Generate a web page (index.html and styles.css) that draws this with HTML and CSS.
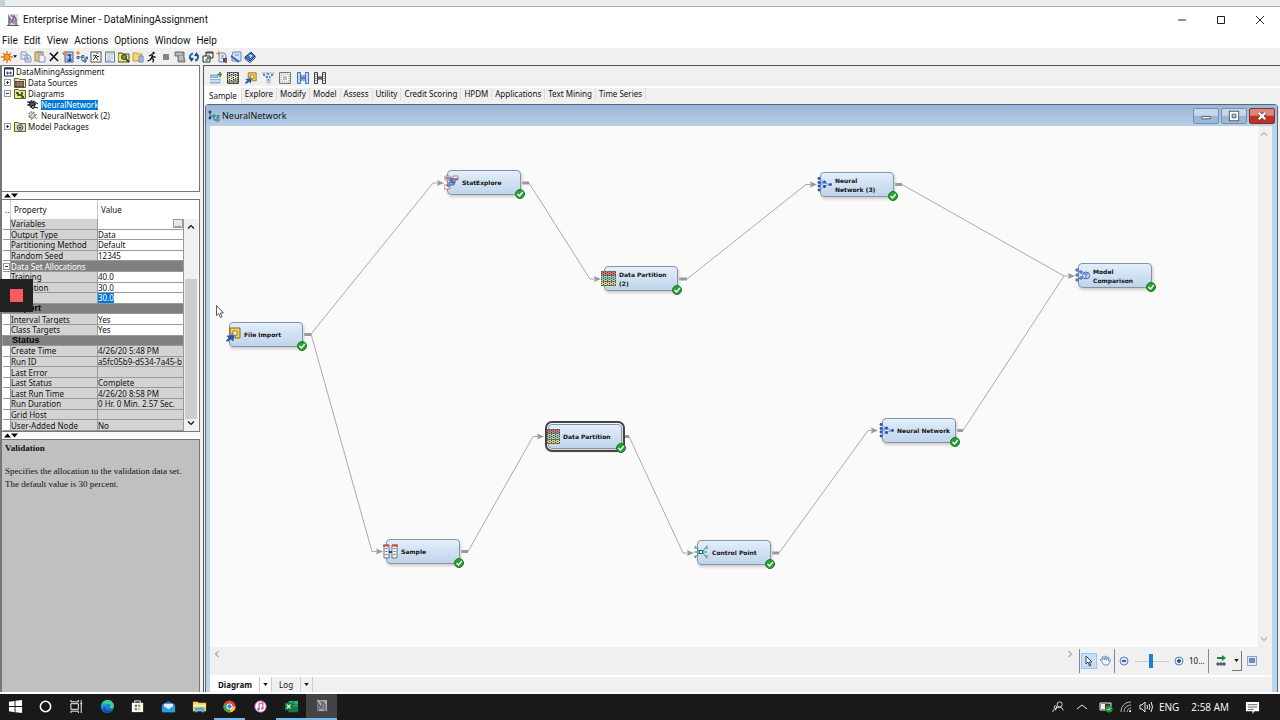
FILE: index.html
```html
<!DOCTYPE html>
<html lang="en">
<head>
    <meta charset="utf-8">
    <title>Enterprise Miner - DataMiningAssignment</title>
    <link rel="stylesheet" href="styles.css">
</head>
<body>
    <!-- shared icons -->
    <svg class="sprite" width="0" height="0">
        <defs>
            <linearGradient id="edgeFill" x1="0" y1="0" x2="1" y2="1">
                <stop offset="0" stop-color="#35c1f1"/><stop offset=".5" stop-color="#1b7fd4"/><stop offset="1" stop-color="#0c59a4"/>
            </linearGradient>
            <pattern id="grain" width="4" height="2" patternUnits="userSpaceOnUse">
                <rect width="1" height="1" fill="#333"/><rect x="2" y="1" width="1" height="1" fill="#333"/>
            </pattern>
        </defs>
        <symbol id="logo" viewBox="0 0 12 12">
            <rect x="1" y="0" width="10" height="11" fill="#d5dcea"/>
            <path d="M2 11V3l3 5 2-6 2 3v6" fill="none" stroke="#5a6c9c" stroke-width="1.4"/>
            <path d="M4 1l3 3M7 5v5M3 9l2-2" stroke="#d0544a" stroke-width="1.2"/>
            <path d="M0 11.5h12" stroke="#556"/>
        </symbol>
        <symbol id="sun" viewBox="0 0 12 12">
            <path d="M6 0v12M0 6h12M2 2l8 8M10 2l-8 8" stroke="#e87818" stroke-width="1.3"/>
            <circle cx="6" cy="6" r="3" fill="#f8a028" stroke="#d86810"/>
        </symbol>
        <symbol id="copy" viewBox="0 0 12 12">
            <path d="M1 1h5l1 2v5H1zM5 4h4l2 2v5H5z" fill="#e8f0fa" stroke="#8295b5"/>
            <path d="M6.500 7h3M6.500 9h3M2.500 4h2" stroke="#6f8fc5"/>
        </symbol>
        <symbol id="paste" viewBox="0 0 12 12">
            <rect x="1" y="1" width="8" height="9" fill="#e2c27e" stroke="#a68a50"/>
            <rect x="3" y="0" width="4" height="2.500" fill="#999"/>
            <path d="M5 4h4l2 2v5H5z" fill="#eef4fc" stroke="#7d94b8"/>
        </symbol>
        <symbol id="cross" viewBox="0 0 12 12">
            <path d="M2 2l8 8M10 1L2 10" stroke="#111" stroke-width="1.6"/>
        </symbol>
        <symbol id="newsource" viewBox="0 0 12 12">
            <rect x="3" y="1" width="8" height="10" fill="#b9cdea" stroke="#44618f"/>
            <path d="M4 4h6M4 8h6" stroke="#6d87b5"/><path d="M6 4h2v5M5.500 9.500h4" fill="none" stroke="#123c80" stroke-width="1.3"/>
            <path d="M2.500 0v5M0 2.500h5M1 1l3 3M4 1L1 4" stroke="#ee8828"/>
        </symbol>
        <symbol id="newdiagram" viewBox="0 0 12 12">
            <path d="M3 6h3v-1h1M6 6v4h2M9 7v2" fill="none" stroke="#358055"/>
            <path d="M1 5.500h2v2H1zM6 4.500h2v2H6zM8 9h2v2H8zM10 6h1.500v2H10z" fill="#e8f4ff" stroke="#245ca8"/>
            <path d="M2 0v4M0 2h4" stroke="#ee8828" stroke-width="1.3"/>
        </symbol>
        <symbol id="diagram" viewBox="0 0 12 12">
            <path d="M2 3v5M2 6h4M6 5v5h4" fill="none" stroke="#388060"/>
            <path d="M1 1h2v2H1zM1 7h2v2H1z" fill="#3050a8" stroke="#1c3478" stroke-width=".6"/>
            <path d="M5 5h2v2H5zM9 5.500h2v2H9zM8 9h3v2H8z" fill="#bfe9ee" stroke="#287888"/>
        </symbol>
        <symbol id="runpage" viewBox="0 0 12 12">
            <rect x="1" y="1" width="10" height="10" fill="#f8f8f8" stroke="#555"/>
            <path d="M3 9l2-2 1-3 2 2 1-1M6 6l2 3M3 5l2-1M7 2v1" stroke="#222" fill="none"/>
        </symbol>
        <symbol id="list" viewBox="0 0 12 12">
            <rect x="1.500" y="1" width="9" height="10" fill="#f1f6ff" stroke="#5578a8"/>
            <path d="M1.500 1.500h9" stroke="#a7b968" stroke-width="2"/><path d="M3 4h6M3 6h6M3 8h6M3 9.500h4" stroke="#7ca0d2" stroke-width=".7"/>
        </symbol>
        <symbol id="explore" viewBox="0 0 12 12">
            <path d="M0 2h4l1 1h6v8H0z" fill="#f0e568" stroke="#4b4b24"/>
            <circle cx="6" cy="6" r="2.500" fill="#5c9c68" stroke="#283828"/><path d="M8 8l3 3" stroke="#222" stroke-width="1.5"/>
        </symbol>
        <symbol id="library" viewBox="0 0 12 12">
            <path d="M1 2h4l1 1h4v7H1z" fill="#f5dc68" stroke="#c49a34"/>
            <path d="M7 5h4v6H7z" fill="#dbe9fb" stroke="#5582ba"/><path d="M8 7h2M8 9h2" stroke="#5582ba"/>
        </symbol>
        <symbol id="run" viewBox="0 0 12 12">
            <circle cx="7.500" cy="2" r="1.200" fill="#111"/>
            <path d="M3 5l3-1.500 1 2.500h2.500M6.500 4L5.500 7l2 1.500-.5 3M5.500 7L4 9 1.500 10" fill="none" stroke="#111" stroke-width="1.3"/>
        </symbol>
        <symbol id="stop" viewBox="0 0 12 12"><rect x="3" y="3" width="6" height="6" fill="#858585"/></symbol>
        <symbol id="results" viewBox="0 0 12 12">
            <path d="M1 1h9v5l1 5H4V5H1z" fill="#999" stroke="#777"/><path d="M2 3h6M5 6h4M5 8h4" stroke="#ddd"/>
        </symbol>
        <symbol id="refresh" viewBox="0 0 12 12">
            <path d="M5 2.500a3.500 3.500 0 0 0-2 6M7 9.500a3.500 3.500 0 0 0 2-6" fill="none" stroke="#176bbd" stroke-width="2"/>
            <path d="M1 6.500l5 .5-2.500 4zM11 5.500L6 5l2.500-4z" fill="#0b4f9c"/>
        </symbol>
        <symbol id="windows" viewBox="0 0 12 12">
            <path d="M4 1h7v6H4z" fill="#eee" stroke="#333"/><path d="M4 2h7" stroke="#333"/>
            <path d="M1 5h7v6H1z" fill="#fff" stroke="#222"/><path d="M3 9h3V7M4.500 8L6 6l1.500 2" fill="none" stroke="#188038"/>
        </symbol>
        <symbol id="newpage" viewBox="0 0 12 12">
            <path d="M3 2h5l2 2v7H3z" fill="#e2ebfa" stroke="#6a82b0"/><path d="M5 5h3M5 7h2" stroke="#6a82b0"/>
            <path d="M2.500 0v5M0 2.500h5" stroke="#ee8828"/><path d="M7 7h4v4H7z" fill="#2b4f98"/><path d="M10 8v4" stroke="#c42" stroke-width="2"/>
        </symbol>
        <symbol id="wizard" viewBox="0 0 12 12">
            <path d="M3 1h8v9H2V4z" fill="#cfe2fa" stroke="#6488c0"/><path d="M5 4h4" stroke="#6488c0"/><path d="M1 5l8 6" stroke="#326ab8" stroke-width="2"/>
        </symbol>
        <symbol id="help" viewBox="0 0 12 12">
            <path d="M1 6v2l5 3.500L11 7V5" fill="#f0f5fa" stroke="#163f7c"/><path d="M1 6l6-5 4 4-5 5z" fill="#3d78bd" stroke="#163f7c"/><path d="M5 5l2-1 1 1-2 1.500" fill="none" stroke="#fff"/>
        </symbol>

        <!-- project tree -->
        <symbol id="project" viewBox="0 0 10 10"><path d="M.5 1h9v8h-9z" fill="#fff" stroke="#223"/><path d="M0 1.500h10" stroke="#234" stroke-width="2"/><path d="M2 6h6M3.500 4.500v3M6.500 4.500v3" stroke="#357"/></symbol>
        <symbol id="folderdata" viewBox="0 0 12 10"><path d="M.5 2V.5h4l1 1h6v8H.5z" fill="#efe98f" stroke="#625e30"/><path d="M1 3h9v6H1z" fill="#52323b"/><path d="M1 5h9M1 7h9M4 3v6M7 3v6" stroke="#d4c5b8" stroke-width=".6"/></symbol>
        <symbol id="folderdiagram" viewBox="0 0 12 10"><path d="M.5 2V.5h4l1 1h6v8H.5z" fill="#eee778" stroke="#625e30"/><path d="M2 4h2v2h4v2h2M7 4h2" fill="none" stroke="#182f28" stroke-width="1.3"/></symbol>
        <symbol id="foldermodel" viewBox="0 0 12 10"><path d="M.5 2V.5h4l1 1h6v8H.5z" fill="#eee778" stroke="#625e30"/><circle cx="6" cy="5.500" r="2.800" fill="#9dc7f0" stroke="#334a90"/><path d="M4.500 5h3L6 7z" fill="#23377c"/></symbol>
        <symbol id="gear" viewBox="0 0 12 10"><circle cx="5" cy="4" r="3" fill="#446" stroke="#111" stroke-width="1.500" stroke-dasharray="1.500 1"/><path d="M0 2h3M0 5h3M7 7l4 1M8 2l3 2" stroke="#111"/><circle cx="6" cy="7" r="1.500" fill="#abc" stroke="#111"/></symbol>
        <symbol id="geargrey" viewBox="0 0 12 10"><circle cx="5" cy="4" r="3" fill="#ddd" stroke="#777" stroke-width="1.500" stroke-dasharray="1.500 1"/><path d="M2 7l5-6M4 9l6-6M8 6l2 2" stroke="#888"/></symbol>

        <!-- node and palette icons -->
        <symbol id="append" viewBox="0 0 12 12"><path d="M0 3h8v3H0zM0 7h10v4H0z" fill="#a6c5e8" stroke="#718cad" stroke-width=".7"/><path d="M0 6.500h9M0 9h10" stroke="#f3f8fc"/><path d="M10 0v5M7.500 2.500h5" stroke="#20953a" stroke-width="1.6"/></symbol>
        <symbol id="partition" viewBox="0 0 15 15">
            <rect width="15" height="15" fill="#e6eae8"/><path d="M0 2.500h15" stroke="#cf7478" stroke-width="3"/><path d="M0 7.500h15" stroke="#8cc0a8" stroke-width="4"/><path d="M0 12.500h15" stroke="#d8d16c" stroke-width="3"/>
            <rect width="15" height="15" fill="url(#grain)" opacity=".8"/><path d="M0 .5h15M0 14.500h15M0 4.500h15M0 10.500h15" fill="none" stroke="#444" stroke-width=".7"/>
        </symbol>
        <symbol id="partitionmono" viewBox="0 0 12 12"><rect width="12" height="12" fill="#eee"/><rect width="12" height="12" fill="url(#grain)"/><path d="M.5.5h11v11H.5zM0 3h12M0 9h12" fill="none" stroke="#333" stroke-width=".8"/><path d="M1 6l3-2 4 4 3-2M1 10.500h10" fill="none" stroke="#a2a035"/></symbol>
        <symbol id="import" viewBox="0 0 15 15">
            <path d="M4 1h10v10H9V8h2V4H7v3H4z" fill="#f6cf53" stroke="#8f6a12"/><path d="M7.500 4.500h3v3h-3z" fill="#dce9f8"/>
            <path d="M0 14l3-3-2-2 7-1-1 6-2-2-3 2z" fill="#225caf" stroke="#163f80" stroke-width=".6"/>
        </symbol>
        <symbol id="filter" viewBox="0 0 12 12"><path d="M0 1h12L8 6v5H5V6z" fill="#dfeaf7" stroke="#8399b5" stroke-width=".7"/><path d="M1 3h2M5 2h2M9 3h2M4 5h2M7 5h1M6 8h1" stroke="#386bb0" stroke-width="1.500"/></symbol>
        <symbol id="merge" viewBox="0 0 12 12"><path d="M.5.5h11v11H.5z" fill="#f3f3f3" stroke="#777"/><path d="M2 2h8v8H2z" fill="none" stroke="#a99" stroke-dasharray="1 1"/><path d="M4 5h4M4 7h4" stroke="#69a"/></symbol>
        <symbol id="sample" viewBox="0 0 15 15">
            <path d="M1 1h5v13H1zM9 1h5v13H9z" fill="#f7f7f7" stroke="#66747f"/><path d="M0 1.500h6M9 1.500h6" stroke="#d44540" stroke-width="2"/>
            <path d="M3.500 4v9M11.500 4v9" stroke="#446eaa" stroke-width="2" stroke-dasharray="1 2"/><path d="M6 8h3" stroke="#1849a8" stroke-width="2"/>
        </symbol>
        <symbol id="samplemono" viewBox="0 0 12 12"><path d="M.5.5h3v11h-3zM8.500.5h3v11h-3z" fill="#eee" stroke="#444"/><path d="M2 2v8M10 2v8" stroke="#555" stroke-dasharray="1 1"/><path d="M4 6h4M5 4v4M7 4v4" stroke="#333"/></symbol>
        <symbol id="timesample" viewBox="0 0 12 12"><path d="M.5.5h3v11h-3zM8.500.5h3v11h-3z" fill="#bed9f8" stroke="#3f73b6"/><path d="M4 6h4M5 3v6M7 3v6" stroke="#2e5ca8"/></symbol>
        <symbol id="statexplore" viewBox="0 0 15 15">
            <path d="M1 1h5v4H1zM9 1h5v4H9zM0 10h6v4H0z" fill="#f6f6f8" stroke="#9a8a90"/><path d="M6 3h2v3H6zM5 7h5v3H5zM8 4h3v4H8z" fill="#8cb5e0" stroke="#3b65a8"/>
            <path d="M2 3h3M5 12l-2-2M11 4h3" stroke="#c33939" stroke-width="1.5"/>
        </symbol>
        <symbol id="neural" viewBox="0 0 15 15">
            <path d="M2 1l5 4-5 1 5 3-5 4M2 6h5M2 9l5-4 6 3-6 1M7 5l6 3" fill="none" stroke="#6b88c8" stroke-width=".7"/>
            <g fill="#1f4fb0"><circle cx="2" cy="1.500" r="1.400"/><circle cx="2" cy="5.500" r="1.400"/><circle cx="2" cy="9" r="1.400"/><circle cx="2" cy="13" r="1.400"/><circle cx="7.500" cy="5" r="1.500"/><circle cx="7.500" cy="9.500" r="1.500"/><circle cx="13.500" cy="7.500" r="1.400"/></g>
        </symbol>
        <symbol id="compare" viewBox="0 0 15 15">
            <path d="M1 1h2v2H1zM1 6h2v2H1zM1 11h2v2H1zM5 3h2v2H5zM5 9h2v2H5z" fill="#fff" stroke="#2959b5"/><circle cx="11" cy="7.500" r="3.500" fill="#c9dcf5" stroke="#3f6cb8"/><path d="M9 6h4M11 6v4M3 2l2 2M3 12l2-2" stroke="#3f6cb8"/>
        </symbol>
        <symbol id="control" viewBox="0 0 15 15">
            <path d="M0 7h5M1 1l4 5M1 13l4-5M9 7h4M9 6l4-5M9 8l4 5M13 1v3M13 10v3M1 2v2M1 10v3" fill="none" stroke="#2e9b69"/><path d="M5.500 5.500h3v3h-3z" fill="#fff" stroke="#2155a8"/>
        </symbol>
        <symbol id="check" viewBox="0 0 10 10"><circle cx="5" cy="5" r="4.500" fill="#2c9f32" stroke="#167b1d"/><path d="M2.500 5l2 2 3.300-4" fill="none" stroke="#fff" stroke-width="1.3"/></symbol>
        <symbol id="up" viewBox="0 0 8 8"><path d="M1 5.500l3-3 3 3" fill="none" stroke="currentColor" stroke-width="1.2"/></symbol>
        <symbol id="down" viewBox="0 0 8 8"><path d="M1 2.500l3 3 3-3" fill="none" stroke="currentColor" stroke-width="1.2"/></symbol>
        <symbol id="left" viewBox="0 0 8 8"><path d="M5.500 1l-3 3 3 3" fill="none" stroke="currentColor" stroke-width="1.2"/></symbol>
        <symbol id="right" viewBox="0 0 8 8"><path d="M2.500 1l3 3-3 3" fill="none" stroke="currentColor" stroke-width="1.2"/></symbol>
        <symbol id="caret" viewBox="0 0 6 4"><path d="M0 0h6L3 4z" fill="#111"/></symbol>
        <symbol id="splitarrows" viewBox="0 0 16 5"><path d="M1 4.500h7L4.500.5zM8 .5h7L11.500 4.500z" fill="#000"/></symbol>
        <symbol id="pointer" viewBox="0 0 8 13"><path d="M.5.5v10l2.300-2 1.700 4 1.500-.7-1.600-3.800h3z" fill="#fff" stroke="#333" stroke-width=".8"/></symbol>
    </svg>

    <div class="behind"></div>

    <header class="titlebar">
        <svg class="logo"><use href="#logo"/></svg>
        <h1>Enterprise Miner - DataMiningAssignment</h1>
        <div class="winbuttons">
            <button aria-label="Minimize"><svg viewBox="0 0 10 10"><path d="M1 5h8" stroke="#222"/></svg></button>
            <button aria-label="Maximize"><svg viewBox="0 0 10 10"><path d="M1.500 1.500h7v7h-7z" fill="none" stroke="#222"/></svg></button>
            <button aria-label="Close"><svg viewBox="0 0 10 10"><path d="M1 1l8 8M9 1L1 9" stroke="#222"/></svg></button>
        </div>
    </header>

    <nav class="menubar">
        <button>File</button><button>Edit</button><button>View</button><button>Actions</button><button>Options</button><button>Window</button><button>Help</button>
    </nav>

    <div class="toolbar">
        <button class="wide" aria-label="New"><svg><use href="#sun"/></svg><svg class="caret"><use href="#caret"/></svg></button>
        <button aria-label="Copy"><svg><use href="#copy"/></svg></button>
        <button aria-label="Paste"><svg><use href="#paste"/></svg></button>
        <button aria-label="Delete"><svg><use href="#cross"/></svg></button>
        <button aria-label="Create Data Source"><svg><use href="#newsource"/></svg></button>
        <button aria-label="Create Diagram"><svg><use href="#newdiagram"/></svg></button>
        <button aria-label="Run Page"><svg><use href="#runpage"/></svg></button>
        <button aria-label="Log"><svg><use href="#list"/></svg></button>
        <button aria-label="Explorer"><svg><use href="#explore"/></svg></button>
        <button aria-label="Library"><svg><use href="#library"/></svg></button>
        <button aria-label="Run"><svg><use href="#run"/></svg></button>
        <button aria-label="Stop"><svg><use href="#stop"/></svg></button>
        <button aria-label="Results"><svg><use href="#results"/></svg></button>
        <button aria-label="Refresh"><svg><use href="#refresh"/></svg></button>
        <button aria-label="Windows"><svg><use href="#windows"/></svg></button>
        <button aria-label="Model Package"><svg><use href="#newpage"/></svg></button>
        <button aria-label="Wizard"><svg><use href="#wizard"/></svg></button>
        <button aria-label="Help"><svg><use href="#help"/></svg></button>
    </div>

    <main class="main">
        <aside class="side">
            <ul class="tree">
                <li><svg class="proj"><use href="#project"/></svg>DataMiningAssignment</li>
                <li><span class="toggle plus"></span><svg><use href="#folderdata"/></svg>Data Sources</li>
                <li><span class="toggle"></span><svg><use href="#folderdiagram"/></svg>Diagrams</li>
                <li class="child"><svg><use href="#gear"/></svg><span class="selected">NeuralNetwork</span></li>
                <li class="child"><svg><use href="#geargrey"/></svg>NeuralNetwork (2)</li>
                <li><span class="toggle plus"></span><svg><use href="#foldermodel"/></svg>Model Packages</li>
            </ul>
            <div class="split"><svg><use href="#splitarrows"/></svg></div>
            <section class="props">
                <div class="props-head"><span class="dots">..</span><span class="prop">Property</span><span class="val">Value</span></div>
                <div class="props-body">
                    <table>
                        <tbody>
                            <tr><td></td><th>Variables</th><td><button class="more">...</button></td></tr>
                            <tr><td></td><th>Output Type</th><td>Data</td></tr>
                            <tr><td></td><th>Partitioning Method</th><td>Default</td></tr>
                            <tr><td></td><th>Random Seed</th><td>12345</td></tr>
                            <tr class="group"><td><span class="toggle"></span></td><th colspan="2">Data Set Allocations</th></tr>
                            <tr><td></td><th>Training</th><td>40.0</td></tr>
                            <tr><td></td><th>Validation</th><td>30.0</td></tr>
                            <tr><td></td><th>Test</th><td><span class="selected">30.0</span></td></tr>
                            <tr class="group heading"><th colspan="3">Report</th></tr>
                            <tr><td></td><th>Interval Targets</th><td>Yes</td></tr>
                            <tr><td></td><th>Class Targets</th><td>Yes</td></tr>
                            <tr class="group heading"><th colspan="3">Status</th></tr>
                            <tr class="fixed"><td></td><th>Create Time</th><td>4/26/20 5:48 PM</td></tr>
                            <tr class="fixed"><td></td><th>Run ID</th><td>a5fc05b9-d534-7a45-b</td></tr>
                            <tr class="fixed"><td></td><th>Last Error</th><td></td></tr>
                            <tr class="fixed"><td></td><th>Last Status</th><td>Complete</td></tr>
                            <tr class="fixed"><td></td><th>Last Run Time</th><td>4/26/20 8:58 PM</td></tr>
                            <tr class="fixed"><td></td><th>Run Duration</th><td>0 Hr. 0 Min. 2.57 Sec.</td></tr>
                            <tr class="fixed"><td></td><th>Grid Host</th><td></td></tr>
                            <tr class="fixed"><td></td><th>User-Added Node</th><td>No</td></tr>
                        </tbody>
                    </table>
                    <div class="vscroll"><svg><use href="#up"/></svg><span class="bar"></span><svg><use href="#down"/></svg></div>
                </div>
            </section>
            <div class="split"><svg><use href="#splitarrows"/></svg></div>
            <section class="info">
                <h2>Validation</h2>
                <p>Specifies the allocation to the validation data set. The default value is 30 percent.</p>
            </section>
        </aside>

        <section class="work">
            <div class="palette">
                <button aria-label="Append"><svg><use href="#append"/></svg></button>
                <button aria-label="Data Partition"><svg><use href="#partitionmono"/></svg></button>
                <button aria-label="File Import"><svg><use href="#import"/></svg></button>
                <button aria-label="Filter"><svg><use href="#filter"/></svg></button>
                <button aria-label="Input Data"><svg><use href="#merge"/></svg></button>
                <button aria-label="Merge"><svg><use href="#timesample"/></svg></button>
                <button aria-label="Sample"><svg><use href="#samplemono"/></svg></button>
            </div>
            <div class="tabs">
                <button class="active">Sample</button><button>Explore</button><button>Modify</button><button>Model</button><button>Assess</button><button>Utility</button><button>Credit Scoring</button><button>HPDM</button><button>Applications</button><button>Text Mining</button><button>Time Series</button>
            </div>

            <div class="frame">
                <div class="frame-title">
                    <svg><use href="#diagram"/></svg>
                    <h2>NeuralNetwork</h2>
                    <button aria-label="Minimize"><svg viewBox="0 0 24 15"><path d="M7.500 8h9v2.500h-9z" fill="#fff" stroke="#556"/></svg></button>
                    <button aria-label="Restore"><svg viewBox="0 0 24 15"><path d="M8.500 4h7v7h-7z" fill="none" stroke="#4a5868" stroke-width="4"/><path d="M8.500 4h7v7h-7z" fill="none" stroke="#fff" stroke-width="2"/></svg></button>
                    <button class="close" aria-label="Close"><svg viewBox="0 0 24 15"><path d="M8.500 4l7 7M15.500 4l-7 7" stroke="#633" stroke-width="4"/><path d="M8.500 4l7 7M15.500 4l-7 7" stroke="#fff" stroke-width="2.500"/></svg></button>
                </div>
                <div class="frame-body">
                    <div class="canvas-row">
                        <div class="canvas">
                            <svg class="links" viewBox="210 126 1048 522" width="1048" height="522">
                                <g fill="none" stroke="#aaa">
                                    <path d="M311 334L433 183h9"/>
                                    <path d="M311 334L372 551.500h9"/>
                                    <path d="M529 183L590 279h9"/>
                                    <path d="M687 279L806 184.500h9"/>
                                    <path d="M902 184.500L1064 276h9"/>
                                    <path d="M468 551.500L533 436.500h9"/>
                                    <path d="M629 436.500L683 553h9"/>
                                    <path d="M779 553L868 430.500h8"/>
                                    <path d="M963 430.500L1064 276"/>
                                </g>
                                <g fill="#999">
                                    <path d="M437 180l7 3-7 3 1-3zM376 548.500l7 3-7 3 1-3zM594 276l7 3-7 3 1-3zM810 181.500l7 3-7 3 1-3zM1068 273l7 3-7 3 1-3zM537 433.500l7 3-7 3 1-3zM687 550l7 3-7 3 1-3zM871 427.500l7 3-7 3 1-3z"/>
                                </g>
                                <path d="M304 334.500h7M522 183h7M679 279h8M895 184.500h7M461 551.500h7M624 436.500h5M772 553h7M957 430.500h6" stroke="#999" stroke-width="3"/>
                            </svg>
                            <div class="node n-import"><svg class="kind"><use href="#import"/></svg><span>File Import</span><svg class="ok"><use href="#check"/></svg></div>
                            <div class="node n-stat"><svg class="kind"><use href="#statexplore"/></svg><span>StatExplore</span><svg class="ok"><use href="#check"/></svg></div>
                            <div class="node n-part2"><svg class="kind"><use href="#partition"/></svg><span>Data Partition<br>(2)</span><svg class="ok"><use href="#check"/></svg></div>
                            <div class="node n-neural3"><svg class="kind"><use href="#neural"/></svg><span>Neural<br>Network (3)</span><svg class="ok"><use href="#check"/></svg></div>
                            <div class="node n-compare"><svg class="kind"><use href="#compare"/></svg><span>Model<br>Comparison</span><svg class="ok"><use href="#check"/></svg></div>
                            <div class="node n-sample"><svg class="kind"><use href="#sample"/></svg><span>Sample</span><svg class="ok"><use href="#check"/></svg></div>
                            <div class="node n-part picked"><svg class="kind"><use href="#partition"/></svg><span>Data Partition</span><svg class="ok"><use href="#check"/></svg></div>
                            <div class="node n-control"><svg class="kind"><use href="#control"/></svg><span>Control Point</span><svg class="ok"><use href="#check"/></svg></div>
                            <div class="node n-neural"><svg class="kind"><use href="#neural"/></svg><span>Neural Network</span><svg class="ok"><use href="#check"/></svg></div>
                            <svg class="cursor"><use href="#pointer"/></svg>
                        </div>
                        <div class="vscroll light"><svg><use href="#up"/></svg><svg><use href="#down"/></svg></div>
                    </div>
                    <div class="canvas-tools">
                        <div class="hscroll"><svg><use href="#left"/></svg><svg><use href="#right"/></svg></div>
                        <div class="group-tools">
                            <button class="on" aria-label="Select"><svg viewBox="0 0 12 12"><path d="M3 1v8l2-2 1.500 4 1.300-.6L6.500 7H9z" fill="#fff" stroke="#345"/></svg></button>
                            <button aria-label="Pan"><svg viewBox="0 0 12 12"><path d="M3 7L1 5l1-1 2 1-1-3 1-.5L6 5V1h1l.5 4L9 2l1 .5L9.500 6 11 4.500l.5 1L9 10H5z" fill="#eef5ff" stroke="#4a78b5" stroke-width=".8"/></svg></button>
                        </div>
                        <div class="group-tools zoom">
                            <button aria-label="Zoom out"><svg viewBox="0 0 12 12"><circle cx="6" cy="6" r="4" fill="#d8e8fa" stroke="#5b83b8"/><path d="M4 6h4" stroke="#123e8c" stroke-width="1.5"/></svg></button>
                            <input type="range" min="0" max="100" value="47" aria-label="Zoom">
                            <button aria-label="Zoom in"><svg viewBox="0 0 12 12"><circle cx="6" cy="6" r="4" fill="#d8e8fa" stroke="#5b83b8"/><path d="M4 6h4M6 4v4" stroke="#123e8c" stroke-width="1.5"/></svg></button>
                            <span>10...</span>
                        </div>
                        <div class="group-tools last">
                            <button class="layout" aria-label="Layout"><svg viewBox="0 0 12 12"><path d="M2 3h6" stroke="#178a38" stroke-width="2"/><path d="M7 0l4 3-4 3z" fill="#178a38"/><path d="M2 8h2v2H2zM8 8h2v2H8zM4 9h4M6 7v4" fill="none" stroke="#234"/></svg></button>
                            <button class="drop" aria-label="Layout options"><svg class="caret"><use href="#caret"/></svg></button>
                            <button class="view" aria-label="Overview"><svg viewBox="0 0 12 12"><path d="M1.500 1.500h9v9h-9z" fill="#e3eaf8" stroke="#86a2ca"/><path d="M3 3h6v5H3z" fill="#7485ca"/></svg></button>
                        </div>
                    </div>
                    <div class="bottom-tabs">
                        <button class="active">Diagram</button><button class="active arrow" aria-label="Diagram menu"><svg class="caret"><use href="#caret"/></svg></button>
                        <button class="log">Log</button><button class="arrow" aria-label="Log menu"><svg class="caret"><use href="#caret"/></svg></button>
                    </div>
                </div>
            </div>
        </section>
    </main>

    <footer class="taskbar">
        <div class="apps">
            <button aria-label="Start"><svg viewBox="0 0 16 16"><path d="M1 3l6-1v5.500H1zM8 1.800L15 1v6.500H8zM1 8.500h6V14l-6-1zM8 8.500h7V15l-7-.8z" fill="#fff"/></svg></button>
            <button aria-label="Cortana"><svg viewBox="0 0 16 16"><circle cx="8" cy="8" r="5.500" fill="none" stroke="#fff" stroke-width="1.600"/></svg></button>
            <button aria-label="Task View"><svg viewBox="0 0 16 16"><path d="M2 1v2h8V1M2 15v-2h8v2M2 5h8v6H2zM13 1v14M12 5h2" fill="none" stroke="#fff"/></svg></button>
            <button aria-label="Edge"><svg viewBox="0 0 16 16"><circle cx="8" cy="8" r="7" fill="url(#edgeFill)"/><path d="M5 9c0-5 6-5 6-2 0 1-1 1.500-.5 2.500 1 1 4 .5 4.500-1.500C15 4 12 1 8 1 5 1 3 3 2 5c3-2 5 0 3 4z" fill="#42cf96"/><path d="M5 8c0 4 4 6 8 4-1 2-5 3-7 2-3-1-4-5-1-6z" fill="#0b4b99"/></svg></button>
            <button aria-label="Store"><svg viewBox="0 0 16 16"><path d="M5 4V2h6v2" fill="none" stroke="#fff"/><path d="M2 4h12v10H2z" fill="#fff"/><path d="M5 6h2.500v2.500H5z" fill="#e5482e"/><path d="M8.500 6H11v2.500H8.500z" fill="#75b62b"/><path d="M5 9.500h2.500V12H5z" fill="#259be0"/><path d="M8.500 9.500H11V12H8.500z" fill="#f7b719"/></svg></button>
            <button aria-label="Mail"><svg viewBox="0 0 16 16"><path d="M1 6l7-4 7 4v8H1z" fill="#1670bd"/><path d="M3 5h10v6H3z" fill="#dceefa"/><path d="M1 6l7 5 7-5v8H1z" fill="#2a9ce8"/></svg></button>
            <button aria-label="File Explorer"><svg viewBox="0 0 16 16"><path d="M1 3h5l1 1h8v9H1z" fill="#f5cf65"/><path d="M1 6h14v2H1z" fill="#fff0aa"/><path d="M3 14V9h10v5h-3v-2H6v2z" fill="#4badde"/></svg></button>
            <button class="open" aria-label="Chrome"><svg viewBox="0 0 16 16"><circle cx="8" cy="8" r="6.500" fill="#e34234"/><path d="M8 8L2.400 4.700A6.500 6.500 0 0 0 8 14.500z" fill="#38a853"/><path d="M8 8h6.500A6.500 6.500 0 0 1 8 14.500L10 9z" fill="#fbc52c"/><circle cx="8" cy="8" r="3.200" fill="#fff"/><circle cx="8" cy="8" r="2.300" fill="#4285f4"/></svg></button>
            <button aria-label="iTunes"><svg viewBox="0 0 16 16"><circle cx="8" cy="8" r="6" fill="#fff" stroke="#cf70d4"/><path d="M6.500 11V5l4-1v6" fill="none" stroke="#e44b88" stroke-width="1.300"/><circle cx="5.800" cy="11" r="1.300" fill="#845fe0"/><circle cx="9.800" cy="10" r="1.300" fill="#e44b88"/></svg></button>
            <button class="open" aria-label="Excel"><svg viewBox="0 0 16 16"><path d="M5 2h10v12H5z" fill="#2bac70"/><path d="M5 8h10v6H5z" fill="#167743"/><path d="M10 2v12M5 6h10M5 10h10" stroke="#107c41"/><path d="M1 4h8v8H1z" fill="#107c41"/><path d="M3 6l4 4M7 6l-4 4" stroke="#fff" stroke-width="1.300"/></svg></button>
            <button class="open current" aria-label="Enterprise Miner"><svg class="logo"><use href="#logo"/></svg></button>
        </div>
        <div class="tray">
            <svg class="people" viewBox="0 0 14 14"><circle cx="9" cy="4" r="3" fill="none" stroke="#eee"/><path d="M4 11c0-5 9-5 9 0M1 13c0-3 1-4 4-4" fill="none" stroke="#eee"/><circle cx="4" cy="7" r="1.500" fill="none" stroke="#eee"/></svg>
            <svg class="chev" viewBox="0 0 12 12"><path d="M1 8l5-4 5 4" fill="none" stroke="#eee"/></svg>
            <svg viewBox="0 0 14 12"><path d="M1 2h11v7H1z" fill="#333" stroke="#eee"/><path d="M2 3h4v5H2z" fill="#eee"/><circle cx="10" cy="8" r="3.500" fill="#25943a"/><path d="M8.500 8l1 1 2-2" fill="none" stroke="#fff"/></svg>
            <svg viewBox="0 0 14 12"><path d="M2 11C2 5 6 1 12 1M5 11c0-4 3-7 7-7M8 11c0-2 2-4 4-4" fill="none" stroke="#bbb"/><path d="M10 11a2 2 0 0 1 2-2v2z" fill="#fff"/></svg>
            <svg class="volume" viewBox="0 0 14 12"><path d="M1 4h2l3-3v10L3 8H1zM8 4q1 2 0 4M10 3q2 3 0 6M12 1q3 5 0 10" fill="none" stroke="#eee"/></svg>
            <span class="lang">ENG</span>
            <time>2:58 AM</time>
            <svg class="notes" viewBox="0 0 16 16"><path d="M1 2h14v10h-5l-2 3v-3H1z" fill="#fff"/><path d="M3 5h10M3 7.500h10M3 10h6" stroke="#333" stroke-width=".8"/></svg>
        </div>
    </footer>

    <!-- screen recorder badge -->
    <button class="recorder" aria-label="Stop recording"></button>
</body>
</html>
```

FILE: styles.css
```css
*{
    box-sizing: border-box;
}
body{
    margin:0;
    height:100vh;
    display:flex;
    flex-direction: column;
    overflow: hidden;
    background-color: #f0f0f0;
    font-family: "Noto Sans", sans-serif;
    font-size: 8px;
    line-height: 10px;
    color:#111;
}
button{
    font:inherit;
    color:inherit;
    padding:0;
    border:none;
    background:none;
}
h1, h2, p, ul{
    margin:0;
    padding:0;
    font-size: inherit;
    font-weight: normal;
}
svg{
    display:block;
    flex:none;
    width:12px;
    height:12px;
}
svg.sprite{
    position: absolute;
    width:0;
    height:0;
}
svg.caret{
    width:5px;
    height:3px;
}
.selected{
    background-color: #0078d7;
    color:white;
}

/* window top */
.behind{
    height:7px;
    background-color: #eceff1;
    border-bottom:1px solid #a9b1b8;
    border-left:5px solid #c3d3da;
}
.titlebar{
    height:26px;
    display:flex;
    align-items: center;
    gap:4px;
    padding-left:7px;
    background-color: white;
    font:10px/14px Roboto, sans-serif;
}
.winbuttons{
    margin-left:auto;
    padding-right:1px;
    display:flex;
}
.winbuttons button{
    width:39px;
    display:flex;
    justify-content: center;
}
.winbuttons svg{
    width:10px;
    height:10px;
}
.menubar{
    height:15px;
    display:flex;
    gap:6px;
    padding-left:2px;
    background-color: white;
    font:10px/16px Roboto, sans-serif;
}
.toolbar{
    height:17px;
    display:flex;
    align-items: center;
}
.toolbar button{
    width:14px;
    display:flex;
    align-items: center;
    justify-content: center;
}
.toolbar .wide{
    width:19px;
    justify-content: flex-start;
    padding-left:1px;
}
.toolbar .wide .caret{
    width:4px;
}

/* left column */
.main{
    flex:1;
    display:flex;
    gap:3px;
    min-height:0;
    border-bottom:2px solid white;
}
.side{
    width:200px;
    display:flex;
    flex-direction: column;
    border-left:2px solid #777;
}
.tree{
    height:127px;
    display:grid;
    grid-template-rows:repeat(6, 11px);
    list-style: none;
    background-color: white;
    border:1px solid #777;
    border-left:none;
}
.tree li{
    display:flex;
    align-items: center;
    gap:2px;
    padding-left:2px;
}
.tree li.child{
    padding-left:25px;
}
.tree svg{
    height:10px;
}
.tree .proj{
    width:10px;
}
.toggle{
    width:7px;
    height:7px;
    margin-right:1px;
    border:1px solid #999;
    background:linear-gradient(#333, #333) center / 3px 1px no-repeat white;
}
.toggle.plus{
    background:linear-gradient(#333, #333) center / 3px 1px no-repeat, linear-gradient(#333, #333) center / 1px 3px no-repeat white;
}
.split{
    height:7px;
    padding:1px 0 0 1px;
    background-color: #fafafa;
}
.split svg{
    width:16px;
    height:5px;
}
.props{
    height:233px;
    display:flex;
    flex-direction: column;
    border:1px solid #777;
    border-left:none;
    background-color: white;
}
.props-head{
    height:19px;
    display:flex;
    align-items: center;
}
.props-head .dots{
    width:8px;
    padding-left:3px;
}
.props-head .prop{
    width:87px;
    padding-left:3px;
}
.props-head .val{
    padding-left:3px;
}
.props-head .prop, .props-head .val{
    align-self: stretch;
    line-height: 20px;
    border-left:1px solid #ccc;
}
.props-body{
    flex:1;
    display:flex;
    min-height:0;
}
.props table{
    width:182px;
    height:100%;
    table-layout: fixed;
    border-collapse: collapse;
    line-height: 9px;
}
.props td, .props th{
    padding:0;
    border:1px solid #999;
    text-align: left;
    font-weight: normal;
    white-space: nowrap;
    overflow: hidden;
}
.props td:first-child{
    width:8px;
    border-left:none;
}
.props th{
    width:87px;
    background-color: #d3d3d3;
}
.props tr:first-child > *{
    border-top:none;
}
.props .group th{
    background-color: #808080;
    color:white;
}
.props .heading th{
    padding-left:9px;
    color:black;
    font:bold 9px/9px "Liberation Sans", sans-serif;
}
.props .fixed td:last-child{
    background-color: #d3d3d3;
}
.props .toggle{
    display:block;
    margin:0;
}
.more{
    display:block;
    width:10px;
    height:9px;
    margin-left:auto;
    line-height: 6px;
    border:1px solid #999;
    background-color: #e8e8e8;
}
.vscroll{
    width:14px;
    display:flex;
    flex-direction: column;
    align-items: center;
    justify-content: space-between;
    padding:4px 0;
    background-color: #f0f0f0;
}
.vscroll svg{
    width:8px;
    height:8px;
}
.vscroll .bar{
    width:12px;
    height:140px;
    margin-top:auto;
    background-color: #cdcdcd;
}
.vscroll.light{
    color:#b5b5b5;
    padding-right:2px;
}
.info{
    flex:1;
    padding:2px 3px;
    border-right:1px solid #777;
    border-top:1px solid #777;
    background-color: #c0c0c0;
    font:9px/13px "Liberation Serif", serif;
}
.info h2{
    font-weight: bold;
    margin-bottom:10px;
}

/* right column */
.work{
    flex:1;
    min-width:0;
    display:flex;
    flex-direction: column;
    border-top:1px solid #555;
    border-left:1px solid #555;
}
.palette{
    width:128px;
    height:20px;
    display:flex;
    align-items: center;
    justify-content: space-between;
    padding:3px 6px 0;
}
.tabs{
    height:18px;
    display:flex;
    align-items: flex-start;
    padding-left:1px;
    border-top:2px solid white;
}
.tabs button{
    height:12px;
    padding:0 3px;
    border-right:1px solid #ddd;
}
.tabs .active{
    height:16px;
    padding:2px 4px;
    background-color: white;
}
.frame{
    flex:1;
    display:flex;
    flex-direction: column;
    min-height:0;
    margin:0 2px 0 1px;
    padding:0 5px 0 4px;
    border:1px solid #536a78;
    border-bottom:none;
    border-radius: 4px 4px 0 0;
    background-color: #bcd2e8;
}
.frame-title{
    height:21px;
    display:flex;
    align-items: center;
    gap:2px;
    margin:0 -5px 0 -4px;
    padding:0 2px;
    background:linear-gradient(#9ab5d5, #b9cfe7);
    font-size: 9px;
}
.frame-title h2{
    margin-right:auto;
}
.frame-title button{
    width:26px;
    height:16px;
    border:1px solid #7890ae;
    border-radius: 2px;
    background:linear-gradient(#c5d8ec 45%, #9ab8da 50%);
}
.frame-title button svg{
    width:24px;
    height:14px;
}
.frame-title .close{
    border-color: #7d3028;
    background:linear-gradient(#dc8878 45%, #bd3420 50%);
}
.frame-body{
    flex:1;
    display:flex;
    flex-direction: column;
    min-height:0;
    background-color: #f0f0f0;
}
.canvas-row{
    flex:1;
    display:flex;
    min-height:0;
}
.canvas{
    flex:1;
    position: relative;
    overflow: hidden;
    background-color: #fafafa;
}
.links{
    width:1048px;
    height:522px;
}

/* diagram nodes */
.node{
    position: absolute;
    width:74px;
    height:25px;
    display:flex;
    align-items: center;
    border:1px solid #8794a5;
    border-radius: 4px;
    background:linear-gradient(#e2eefb, #bfd4ea);
    box-shadow:1px 2px 3px #ccc;
    font:bold 6px/9px "DejaVu Sans", sans-serif;
    white-space: nowrap;
}
.node .kind{
    width:15px;
    height:15px;
    margin-left:-4px;
    margin-right:3px;
}
.node .ok{
    position: absolute;
    right:-5px;
    bottom:-5px;
    width:10px;
    height:10px;
}
.picked{
    outline:2px solid #444;
    outline-offset:1px;
}
.n-import{ left:19px; top:196px; }
.n-stat{ left:237px; top:44px; }
.n-part2{ left:394px; top:140px; }
.n-neural3{ left:610px; top:46px; }
.n-compare{ left:868px; top:137px; }
.n-sample{ left:176px; top:413px; }
.n-part{ left:338px; top:298px; }
.n-control{ left:487px; top:414px; }
.n-neural{ left:672px; top:292px; }
.cursor{
    position: absolute;
    left:6px;
    top:179px;
    width:8px;
    height:13px;
}

/* bar under the diagram */
.canvas-tools{
    height:28px;
    display:flex;
    padding:2px 0;
}
.hscroll{
    flex:1;
    display:flex;
    justify-content: space-between;
    padding:1px 5px 0 3px;
    color:#aaa;
}
.hscroll svg{
    width:8px;
    height:8px;
}
.group-tools{
    display:flex;
    align-items: center;
    padding:0 1px;
    border-left:1px solid #888;
}
.group-tools button{
    width:16px;
    height:16px;
    display:flex;
    align-items: center;
    justify-content: center;
}
.group-tools .on{
    background-color: #c5dffa;
    border:1px solid #9ac2ec;
}
.zoom span{
    width:18px;
    margin-left:2px;
}
.group-tools.last{
    padding-right:10px;
}
.group-tools .layout{
    width:22px;
}
.group-tools .drop{
    width:10px;
    height:20px;
    border-right:1px solid #777;
    border-bottom:1px solid #777;
}
.group-tools .view{
    width:20px;
}
input[type=range]{
    appearance: none;
    width:34px;
    height:14px;
    margin:0 2px 0 3px;
    background:linear-gradient(#ccc, #ccc) center / 100% 1px no-repeat;
}
input[type=range]::-webkit-slider-thumb{
    appearance: none;
    width:4px;
    height:14px;
    background-color: #1c7fd0;
}
.bottom-tabs{
    height:17px;
    display:flex;
    border-top:2px solid white;
}
.bottom-tabs button{
    padding:0 7px 0 8px;
    border-right:1px solid #ccc;
}
.bottom-tabs .arrow{
    padding:0 3px;
}
.bottom-tabs .log{
    padding:0 7px;
}
.bottom-tabs .active{
    background-color: white;
    font-weight: bold;
}

/* taskbar */
.taskbar{
    height:26px;
    display:flex;
    justify-content: space-between;
    background-color: #191919;
    color:white;
}
.apps{
    width:337px;
    display:grid;
    grid-template-columns:repeat(11, 1fr);
}
.apps button{
    display:flex;
    align-items: center;
    justify-content: center;
    border-bottom:2px solid transparent;
}
.apps svg{
    width:15px;
    height:15px;
}
.apps svg.logo{
    width:12px;
    height:12px;
    opacity:.7;
}
.apps .open{
    border-color: #76b9ed;
}
.apps .current{
    background-color: #444;
}
.tray{
    display:flex;
    align-items: center;
    gap:6px;
    padding-right:20px;
    font:10px/14px "Open Sans", sans-serif;
}
.tray svg{
    width:14px;
}
.tray .chev{
    margin:0 4px;
}
.tray time{
    margin:0 10px 0 6px;
}
.tray svg.notes{
    width:15px;
    height:15px;
}
.recorder{
    position: fixed;
    left:0;
    top:279px;
    width:33px;
    height:33px;
    background:linear-gradient(#ff5a5f, #ff5a5f) 10px 10px / 13px 13px no-repeat #222;
}
```
